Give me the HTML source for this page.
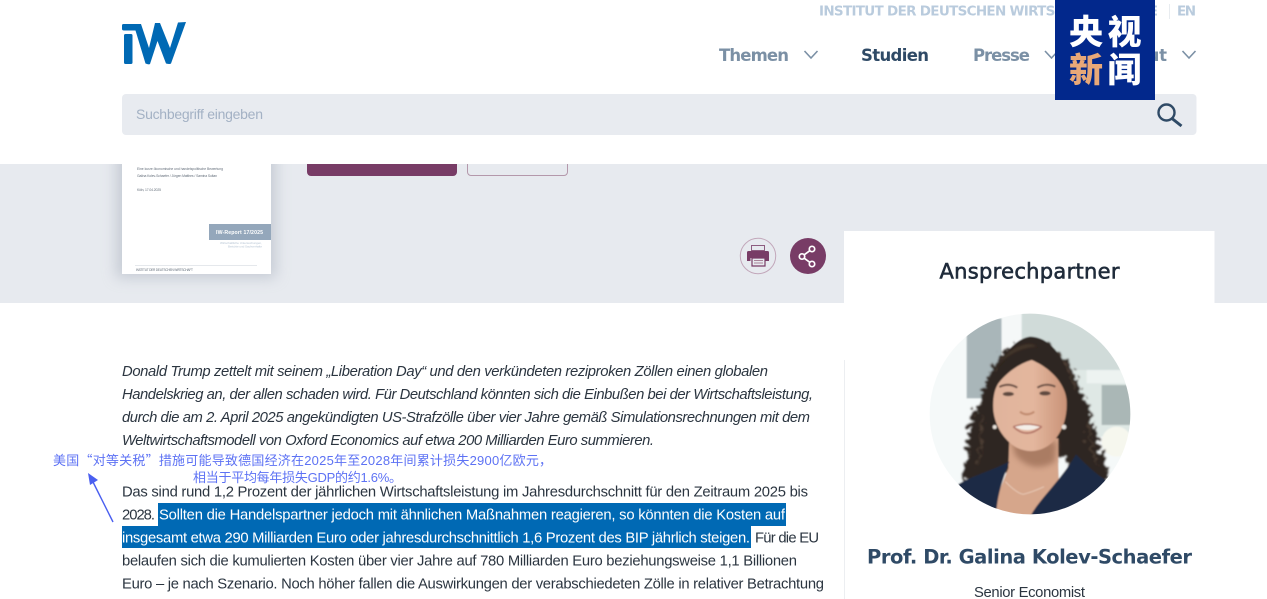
<!DOCTYPE html>
<html lang="de">
<head>
<meta charset="utf-8">
<title>IW Report</title>
<style>
html,body{margin:0;padding:0;background:#fff;width:1267px;height:599px;overflow:hidden}
svg{display:block;position:absolute;left:0;top:0}
text{font-family:"Liberation Sans","Noto Sans CJK SC",sans-serif}
.b{font-size:14.8px;fill:#2b3540}
.i{font-style:italic}
.w{fill:#fff}
.n{font-family:"DejaVu Sans",sans-serif;font-size:16.5px;font-weight:700;fill:#7b90a5}
.cjk{font-family:"Liberation Sans","Noto Sans CJK SC",sans-serif;font-size:13px;fill:#5d72f4}
.q{font-family:"Noto Sans CJK SC",sans-serif}
.bd{font-family:"Noto Sans CJK SC",sans-serif;font-weight:900;font-size:34px}
.dj{font-family:"DejaVu Sans",sans-serif}
</style>
</head>
<body>
<svg width="1267" height="599" viewBox="0 0 1267 599" xmlns="http://www.w3.org/2000/svg">
<defs>
<filter id="sh" x="-20%" y="-20%" width="140%" height="140%"><feGaussianBlur stdDeviation="7"/></filter>
<filter id="bl" x="-10%" y="-10%" width="120%" height="120%"><feGaussianBlur stdDeviation="3"/></filter>
<filter id="bf" x="-20%" y="-20%" width="140%" height="140%"><feGaussianBlur stdDeviation="9"/></filter>
<filter id="all" x="0" y="0" width="100%" height="100%"><feGaussianBlur stdDeviation="2.500"/></filter>
<filter id="curl" x="-20%" y="-20%" width="140%" height="140%">
<feTurbulence type="turbulence" baseFrequency=".04" numOctaves="2" seed="7" result="t"/>
<feDisplacementMap in="SourceGraphic" in2="t" scale="42" xChannelSelector="R" yChannelSelector="G"/>
<feGaussianBlur stdDeviation="2.500"/>
</filter>
<clipPath id="pc"><circle cx="330" cy="327" r="301"/></clipPath>
<linearGradient id="fg" x1="0" y1="0" x2="1" y2="0"><stop offset="0" stop-color="#e0b49c"/><stop offset=".55" stop-color="#e3b69d"/><stop offset="1" stop-color="#c99277"/></linearGradient>
</defs>

<rect width="1267" height="599" fill="#fff"/>
<rect x="0" y="164" width="1267" height="139" fill="#e7eaef"/>
<!-- cover -->
<rect x="116" y="150" width="160" height="128" fill="#aab2bf" opacity=".55" filter="url(#sh)"/>
<rect x="122" y="150" width="149" height="124" fill="#fff"/>
<g font-size="3.4" fill="#66707c">
<text x="137" y="170" textLength="86">Eine kurze ökonomische und handelspolitische Bewertung</text>
<text x="137" y="177" textLength="80">Galina Kolev-Schaefer / Jürgen Matthes / Samina Sultan</text>
<text x="137" y="191" textLength="24">Köln, 17.04.2025</text>
</g>
<rect x="209" y="224" width="62" height="16" fill="#94a7bb"/>
<text x="216" y="234" font-size="5.2" font-weight="700" fill="#fff" textLength="47">IW-Report 17/2025</text>
<g font-size="3" fill="#b7c5d4">
<text x="220" y="244" textLength="42">Wirtschaftliche Untersuchungen,</text>
<text x="228" y="247.500" textLength="34">Berichte und Sachverhalte</text>
</g>
<rect x="135" y="265" width="122" height="1" fill="#e5e8ec"/>
<text x="136" y="271" font-size="3.200" fill="#66707c" textLength="57">INSTITUT DER DEUTSCHEN WIRTSCHAFT</text>

<!-- buttons -->
<path d="M307 160H457V172a4 4 0 0 1-4 4H311a4 4 0 0 1-4-4Z" fill="#783c66"/>
<path d="M467.500 160V172a3.500 3.500 0 0 0 3.500 3.500H564a3.500 3.500 0 0 0 3.500-3.500V160" fill="none" stroke="#b498ab"/>

<!-- header -->
<rect x="0" y="0" width="1267" height="164" fill="#fff"/>
<g fill="#0069b4">
<path d="M122 25.500Q122 24 123.500 24H141L149 48 155 23H160L170 48 178 22.500 186 22 171 63.500Q170 64.500 166 63.500L157.500 41 150 64Q149 65 145.500 63.500L135.500 30.500H124Q122 30.500 122 29Z"/>
<rect x="124" y="34" width="8.500" height="30" rx="1.500"/>
</g>

<text class="dj" x="819" y="15.500" font-size="13.500" font-weight="700" fill="#b9cbdd" textLength="283">INSTITUT DER DEUTSCHEN WIRTSCHAFT</text>
<text class="dj" x="1138" y="15.500" font-size="13.500" font-weight="700" fill="#b9cbdd" textLength="20">DE</text>
<rect x="1169" y="4" width="1" height="15" fill="#e8ecf0"/>
<text class="dj" x="1177" y="15.500" font-size="13.500" font-weight="700" fill="#b9cbdd" textLength="19">EN</text>

<text class="n" x="719" y="61" textLength="70">Themen</text>
<path d="M804.500 51L811 58 817.500 51" fill="none" stroke="#7b90a5" stroke-width="1.600"/>
<text class="n" x="861" y="61" textLength="68" style="fill:#2f4a66">Studien</text>
<text class="n" x="973" y="61" textLength="57">Presse</text>
<path d="M1045 51L1051.500 58 1058 51" fill="none" stroke="#7b90a5" stroke-width="1.600"/>
<text class="n" x="1100" y="61" textLength="67">Institut</text>
<path d="M1182.500 51L1189 58 1195.500 51" fill="none" stroke="#7b90a5" stroke-width="1.600"/>

<rect x="122" y="94" width="1074.500" height="41" rx="4" fill="#e8ebf0"/>
<text x="136" y="119" font-size="14" fill="#a3b1c4" textLength="127">Suchbegriff eingeben</text>
<circle cx="1166.500" cy="112.500" r="8" fill="none" stroke="#2f4a66" stroke-width="2.400"/>
<path d="M1172 118.500L1181.500 126" stroke="#2f4a66" stroke-width="3" fill="none"/>

<!-- badge -->
<rect x="1055" y="0" width="100" height="100" fill="#02288c"/>
<text class="bd" x="1069" y="44" fill="#fff">央</text>
<text class="bd" x="1107.500" y="44" fill="#fff">视</text>
<text class="bd" x="1069" y="82" fill="#e8a878">新</text>
<text class="bd" x="1107.500" y="82" fill="#fff">闻</text>

<!-- contact card -->
<rect x="844" y="231" width="370.500" height="72" fill="#fff"/>
<rect x="844" y="360" width="1" height="239" fill="#eceef1"/>
<text class="dj" x="939.500" y="278.500" font-size="21" fill="#1f2b3a" stroke="#1f2b3a" stroke-width=".6" textLength="180">Ansprechpartner</text>

<!-- print/share -->
<circle cx="758" cy="256" r="17.700" fill="none" stroke="#c2a7ba" stroke-width="1"/>
<g fill="#783c66">
<path d="M751.500 245.500h13v5h-13z" fill="#e7eaef" stroke="#8d5d80" stroke-width="1"/>
<path d="M748.500 251h19a1.500 1.500 0 0 1 1.500 1.500V261h-3.500v-3h-15v3H747v-8.500a1.500 1.500 0 0 1 1.500-1.500Z"/>
<path d="M752 258h13v8h-13z" fill="#e7eaef" stroke="#783c66" stroke-width="1.200"/>
<path d="M754 260.500h9M754 263h9" stroke="#a88398" stroke-width="1"/>
</g>
<circle cx="808" cy="256" r="18" fill="#783c66"/>
<g fill="none" stroke="#fff" stroke-width="1.700">
<circle cx="802" cy="256.500" r="2.700"/>
<circle cx="812" cy="249" r="2.700"/>
<circle cx="812" cy="264" r="2.700"/>
<path d="M804.200 254.800L809.800 250.700M804.200 258.200L809.800 262.300"/>
</g>

<!-- body text -->
<text class="b i" x="122" y="376" textLength="646">Donald Trump zettelt mit seinem „Liberation Day“ und den verkündeten reziproken Zöllen einen globalen</text>
<text class="b i" x="122" y="399" textLength="691">Handelskrieg an, der allen schaden wird. Für Deutschland könnten sich die Einbußen bei der Wirtschaftsleistung,</text>
<text class="b i" x="122" y="422" textLength="688">durch die am 2. April 2025 angekündigten US-Strafzölle über vier Jahre gemäß Simulationsrechnungen mit dem</text>
<text class="b i" x="122" y="445" textLength="532">Weltwirtschaftsmodell von Oxford Economics auf etwa 200 Milliarden Euro summieren.</text>
<rect x="158" y="503" width="628" height="23" fill="#0069b4"/>
<rect x="122" y="526" width="629" height="22" fill="#0069b4"/>
<text class="b" x="122" y="496.500" textLength="686">Das sind rund 1,2 Prozent der jährlichen Wirtschaftsleistung im Jahresdurchschnitt für den Zeitraum 2025 bis</text>
<text class="b" x="122" y="519.500" textLength="33">2028.</text>
<text class="b w" x="159" y="519.500" textLength="626">Sollten die Handelspartner jedoch mit ähnlichen Maßnahmen reagieren, so könnten die Kosten auf</text>
<text class="b w" x="122" y="542.500" textLength="628">insgesamt etwa 290 Milliarden Euro oder jahresdurchschnittlich 1,6 Prozent des BIP jährlich steigen.</text>
<text class="b" x="755" y="542.500" textLength="64">Für die EU</text>
<text class="b" x="122" y="565.500" textLength="675">belaufen sich die kumulierten Kosten über vier Jahre auf 780 Milliarden Euro beziehungsweise 1,1 Billionen</text>
<text class="b" x="122" y="588.500" textLength="702">Euro – je nach Szenario. Noch höher fallen die Auswirkungen der verabschiedeten Zölle in relativer Betrachtung</text>

<!-- annotation -->
<text class="cjk" x="53" y="465" letter-spacing=".22">美国<tspan class="q">“</tspan>对等关税<tspan class="q">”</tspan>措施可能导致德国经济在2025年至2028年间累计损失2900亿欧元，</text>
<text class="cjk" x="193" y="482" textLength="209">相当于平均每年损失GDP的约1.6%。</text>
<path d="M113 522L93 482" stroke="#4a5ff0" stroke-width="1.400" fill="none"/>
<path d="M88 473L98 480 90 485Z" fill="#4a5ff0"/>

<!-- portrait -->
<g transform="translate(920 305) scale(.33333)">
<g clip-path="url(#pc)">
<g filter="url(#all)">
<rect x="0" y="0" width="660" height="660" fill="#f5f9f9"/>
<rect x="140" y="40" width="105" height="240" fill="#a9b6b9"/>
<rect x="245" y="20" width="60" height="170" fill="#f5f8f8"/>
<rect x="305" y="20" width="330" height="175" fill="#d0dbd9"/>
<rect x="430" y="195" width="210" height="200" fill="#dfe8e5"/>
<rect x="545" y="240" width="90" height="120" fill="#aab7b6"/>
<rect x="500" y="195" width="130" height="40" fill="#edf3f1"/>
<ellipse cx="590" cy="410" rx="45" ry="45" fill="#f6f7ee"/>
<!-- hair -->
<path filter="url(#curl)" fill="#2e2520" d="M320 100C260 100 205 150 185 220C170 280 140 320 135 375C130 430 125 470 115 515C165 525 225 510 270 470L420 450C455 490 505 528 555 515C550 465 530 425 515 375C505 320 485 270 460 215C435 145 385 100 320 100Z"/>
<path filter="url(#curl)" fill="none" stroke="#5d4a3c" stroke-width="7" opacity=".7" d="M175 330C165 380 175 420 160 470M490 330C505 385 495 420 525 480M220 190C260 130 320 110 350 125M390 130C425 160 445 200 455 250"/>
<path fill="#2e2520" d="M220 240C235 150 290 100 330 95C385 95 435 150 450 240L445 300 212 300Z"/>
<path fill="#584639" opacity=".6" filter="url(#bl)" d="M225 195C260 125 330 105 350 125C310 125 250 150 225 195Z"/>
<!-- neck and chest -->
<path fill="#d6a68b" d="M268 400L265 490 205 640H420L415 480 415 400Z"/>
<path filter="url(#bf)" fill="#9c6e56" opacity=".75" d="M275 410L410 410 405 470Q340 510 285 450Z"/>
<!-- blazer -->
<path fill="#1f2b45" d="M112 540C150 515 220 495 268 470C250 520 230 570 228 640H60ZM468 448C500 480 525 505 558 525L620 640H328C350 590 420 530 468 448Z"/>
<!-- face -->
<path fill="url(#fg)" d="M335 165C300 175 262 200 235 235 222 255 218 285 220 315 224 360 250 405 290 428 320 443 355 442 385 422 422 395 442 345 440 290 438 240 395 190 335 165Z"/>
<!-- features -->
<path d="M238 246Q265 232 292 248M352 248Q378 232 406 245" stroke="#6b5044" stroke-width="6" fill="none"/>
<ellipse cx="265" cy="267" rx="17" ry="6.500" fill="#5f4a40"/>
<ellipse cx="375" cy="265" rx="17" ry="6.500" fill="#5f4a40"/>
<path d="M300 320Q320 336 343 320" fill="none" stroke="#c08a6e" stroke-width="6"/>
<path d="M283 365Q320 354 362 365Q322 386 283 365Z" fill="#f4efe9"/>
<path d="M280 365Q320 404 365 365" fill="none" stroke="#b37567" stroke-width="5"/>
<path d="M280 365Q320 350 365 365" fill="none" stroke="#b37567" stroke-width="4"/>
<circle cx="432" cy="366" r="7" fill="#e8e2dc"/>
<circle cx="224" cy="366" r="6" fill="#e8e2dc"/>
<path d="M256 530Q290 565 310 568 340 560 372 545" fill="none" stroke="#efd7c6" stroke-width="2"/>
</g>
</g>
</g>

<text class="dj" x="867" y="563.500" font-size="19.500" font-weight="700" fill="#2f4a66" textLength="325">Prof. Dr. Galina Kolev-Schaefer</text>
<text x="974" y="597" font-size="14.800" fill="#2b3540" textLength="111">Senior Economist</text>
</svg>
</body>
</html>
